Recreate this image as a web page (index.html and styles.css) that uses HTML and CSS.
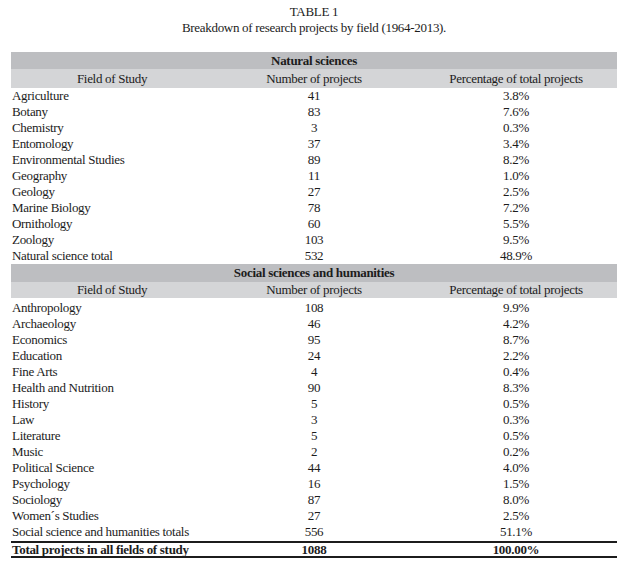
FILE: index.html
```html
<!DOCTYPE html>
<html>
<head>
<meta charset="utf-8">
<link rel="stylesheet" href="styles.css">
</head>
<body>
<div class="page">
  <div class="caption">
    <div class="cap-line">TABLE 1</div>
    <div class="cap-line sub">Breakdown of research projects by field (1964-2013).</div>
  </div>
  <table class="data">
    <colgroup><col class="c"><col class="c"><col class="c"></colgroup>
    <tbody>
      <tr class="section first"><td colspan="3">Natural sciences</td></tr>
      <tr class="colhead first"><td>Field of Study</td><td>Number of projects</td><td>Percentage of total projects</td></tr>
      <tr><td>Agriculture</td><td>41</td><td>3.8%</td></tr>
      <tr><td>Botany</td><td>83</td><td>7.6%</td></tr>
      <tr><td>Chemistry</td><td>3</td><td>0.3%</td></tr>
      <tr><td>Entomology</td><td>37</td><td>3.4%</td></tr>
      <tr><td>Environmental Studies</td><td>89</td><td>8.2%</td></tr>
      <tr><td>Geography</td><td>11</td><td>1.0%</td></tr>
      <tr><td>Geology</td><td>27</td><td>2.5%</td></tr>
      <tr><td>Marine Biology</td><td>78</td><td>7.2%</td></tr>
      <tr><td>Ornithology</td><td>60</td><td>5.5%</td></tr>
      <tr><td>Zoology</td><td>103</td><td>9.5%</td></tr>
      <tr><td>Natural science total</td><td>532</td><td>48.9%</td></tr>
      <tr class="section second"><td colspan="3">Social sciences and humanities</td></tr>
      <tr class="colhead second"><td>Field of Study</td><td>Number of projects</td><td>Percentage of total projects</td></tr>
      <tr class="after-head"><td>Anthropology</td><td>108</td><td>9.9%</td></tr>
      <tr><td>Archaeology</td><td>46</td><td>4.2%</td></tr>
      <tr><td>Economics</td><td>95</td><td>8.7%</td></tr>
      <tr><td>Education</td><td>24</td><td>2.2%</td></tr>
      <tr><td>Fine Arts</td><td>4</td><td>0.4%</td></tr>
      <tr><td>Health and Nutrition</td><td>90</td><td>8.3%</td></tr>
      <tr><td>History</td><td>5</td><td>0.5%</td></tr>
      <tr><td>Law</td><td>3</td><td>0.3%</td></tr>
      <tr><td>Literature</td><td>5</td><td>0.5%</td></tr>
      <tr><td>Music</td><td>2</td><td>0.2%</td></tr>
      <tr><td>Political Science</td><td>44</td><td>4.0%</td></tr>
      <tr><td>Psychology</td><td>16</td><td>1.5%</td></tr>
      <tr><td>Sociology</td><td>87</td><td>8.0%</td></tr>
      <tr><td>Women´s Studies</td><td>27</td><td>2.5%</td></tr>
      <tr class="before-total"><td>Social science and humanities totals</td><td>556</td><td>51.1%</td></tr>
      <tr class="total"><td>Total projects in all fields of study</td><td>1088</td><td>100.00%</td></tr>
    </tbody>
  </table>
</div>
</body>
</html>
```
FILE: styles.css
```css
html, body {
  margin: 0;
  padding: 0;
  background: #ffffff;
}
body {
  font-family: "Liberation Serif", "Times New Roman", serif;
  font-size: 13px;
  letter-spacing: -0.3px;
  color: #1c1c1c;
}
.page {
  width: 606px;
  margin-left: 11px;
  padding-top: 4px;
}
.caption {
  text-align: center;
  line-height: 15px;
  margin-bottom: 17px;
}
.caption .sub {
  margin-top: 1px;
}
.data {
  width: 606px;
  border-collapse: collapse;
  table-layout: fixed;
}
.data td {
  padding: 0;
  line-height: 16px;
  height: 16px;
  text-align: center;
  white-space: nowrap;
  vertical-align: middle;
}
.data td:first-child {
  text-align: left;
  padding-left: 1px;
}
.data .section td {
  background: #bdbec1;
  font-weight: bold;
  text-align: center;
  padding-left: 0;
}
.data .section.first td {
  height: 17px;
  line-height: 17px;
}
.data .section.second td {
  height: 18px;
  line-height: 18px;
}
.data .colhead td {
  background: #d4d5d7;
  text-align: center;
  padding-left: 0;
}
.data .colhead.first td {
  height: 19px;
  line-height: 19px;
}
.data .colhead.second td {
  height: 16px;
  line-height: 16px;
}
.data .after-head td {
  padding-top: 2px;
}
.data .before-total td {
  padding-bottom: 1px;
}
.data .total td {
  font-weight: bold;
  border-top: 2px solid #1c1c1c;
  border-bottom: 2px solid #1c1c1c;
  height: 13px;
  line-height: 13px;
}
```
